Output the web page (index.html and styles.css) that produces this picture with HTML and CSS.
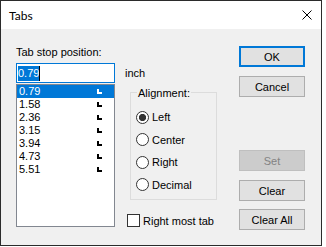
FILE: index.html
```html
<!DOCTYPE html>
<html lang="en">
<head>
    <meta charset="UTF-8">
    <title>Tabs</title>
    <link rel="stylesheet" href="styles.css">
</head>
<body>
    <div class="dialog">
        <div class="titlebar">
            <span class="title">Tabs</span>
            <svg class="close" width="10" height="10" viewBox="0 0 10 10">
                <path d="M0.5 0.5 L9.5 9.5 M9.5 0.5 L0.5 9.5" stroke="#000" stroke-width="1" fill="none"/>
            </svg>
        </div>
        <div class="content">
            <div class="col-left">
                <div class="label">Tab stop position:</div>
                <div class="edit"><span class="sel">0.79</span><span class="caret"></span></div>
                <ul class="list">
                    <li class="selected"><span>0.79</span><i class="tabmark"></i></li>
                    <li><span>1.58</span><i class="tabmark"></i></li>
                    <li><span>2.36</span><i class="tabmark"></i></li>
                    <li><span>3.15</span><i class="tabmark"></i></li>
                    <li><span>3.94</span><i class="tabmark"></i></li>
                    <li><span>4.73</span><i class="tabmark"></i></li>
                    <li><span>5.51</span><i class="tabmark"></i></li>
                </ul>
            </div>
            <div class="col-mid">
                <div class="unit">inch</div>
                <div class="group">
                    <div class="group-label">Alignment:</div>
                    <div class="radios">
                        <div class="radio checked"><span class="circle"></span>Left</div>
                        <div class="radio"><span class="circle"></span>Center</div>
                        <div class="radio"><span class="circle"></span>Right</div>
                        <div class="radio"><span class="circle"></span>Decimal</div>
                    </div>
                </div>
                <div class="check"><span class="box"></span>Right most tab</div>
            </div>
            <div class="col-right">
                <button class="btn default">OK</button>
                <button class="btn btn-cancel">Cancel</button>
                <button class="btn btn-set" disabled>Set</button>
                <button class="btn btn-clear">Clear</button>
                <button class="btn btn-clearall">Clear All</button>
            </div>
        </div>
    </div>
</body>
</html>
```

FILE: styles.css
```css
body {
    margin: 0;
    background-color: #fff;
    font-family: "Liberation Sans", Arial, sans-serif;
    font-size: 11px;
    color: #000;
}
.dialog {
    width: 322px;
    height: 246px;
    box-sizing: border-box;
    border: 1px solid #2b2b2b;
    background-color: #f0f0f0;
    display: flex;
    flex-direction: column;
}
.titlebar {
    height: 28px;
    background-color: #fff;
    display: flex;
    align-items: center;
    padding-left: 8px;
    padding-right: 9px;
}
.title {
    font-family: Lato, "Noto Sans", sans-serif;
    font-size: 12px;
    flex-grow: 1;
}
.close {
    display: block;
}
.content {
    display: flex;
    padding-top: 17px;
    padding-left: 15px;
}
.col-left {
    width: 99px;
}
.label {
    line-height: 13px;
    height: 13px;
}
.edit {
    margin-top: 4px;
    height: 20px;
    box-sizing: border-box;
    border: 1px solid #0078d7;
    background-color: #fff;
    display: flex;
    align-items: center;
    padding-left: 1px;
}
.sel {
    background-color: #0078d7;
    color: #fff;
    line-height: 15px;
}
.caret {
    width: 1px;
    height: 15px;
    background-color: #000;
}
.list {
    list-style: none;
    margin: 1px 0 0 0;
    padding: 0;
    height: 143px;
    box-sizing: border-box;
    border: 1px solid #828790;
    background-color: #fff;
}
.list li {
    height: 13px;
    line-height: 13px;
    display: flex;
    align-items: center;
    padding-left: 2px;
}
.list li.selected {
    background-color: #0078d7;
    color: #fff;
}
.tabmark {
    width: 5px;
    height: 5px;
    box-sizing: border-box;
    border-left: 2px solid #000;
    border-bottom: 2px solid #000;
    margin-left: auto;
    margin-right: 12px;
}
.selected .tabmark {
    border-color: #fff;
}
.col-mid {
    width: 114px;
    margin-left: 10px;
}
.unit {
    margin-top: 17px;
    height: 20px;
    line-height: 20px;
}
.group {
    margin-top: 9px;
    margin-left: 5px;
    width: 87px;
    height: 108px;
    box-sizing: border-box;
    border: 1px solid #dcdcdc;
}
.group-label {
    display: table;
    margin-top: -6px;
    margin-left: 6px;
    padding: 0 1px;
    line-height: 13px;
    background-color: #f0f0f0;
}
.radios {
    margin-top: 6px;
}
.radio {
    height: 22.5px;
    display: flex;
    align-items: center;
    padding-left: 5px;
}
.circle {
    width: 13px;
    height: 13px;
    box-sizing: border-box;
    border: 1px solid #333;
    border-radius: 50%;
    background-color: #fff;
    margin-right: 3px;
}
.radio.checked .circle {
    background: radial-gradient(circle, #333 0 3.3px, #fff 3.9px);
}
.check {
    margin-top: 14px;
    margin-left: 2px;
    height: 13px;
    display: flex;
    align-items: center;
}
.box {
    width: 13px;
    height: 13px;
    box-sizing: border-box;
    border: 1px solid #333;
    background-color: #fff;
    margin-right: 3px;
}
.col-right {
    width: 66px;
    display: flex;
    flex-direction: column;
}
.btn {
    width: 66px;
    height: 21px;
    box-sizing: border-box;
    margin: 0;
    padding: 0;
    border: 1px solid #adadad;
    background-color: #e1e1e1;
    font-family: "Liberation Sans", Arial, sans-serif;
    font-size: 11px;
    color: #000;
}
.btn.default {
    border: 2px solid #0078d7;
}
.btn-cancel {
    margin-top: 9px;
}
.btn-set {
    margin-top: 53px;
    background-color: #cccccc;
    border-color: #bfbfbf;
    color: #838383;
}
.btn-clear {
    margin-top: 9px;
}
.btn-clearall {
    margin-top: 8px;
}
```
